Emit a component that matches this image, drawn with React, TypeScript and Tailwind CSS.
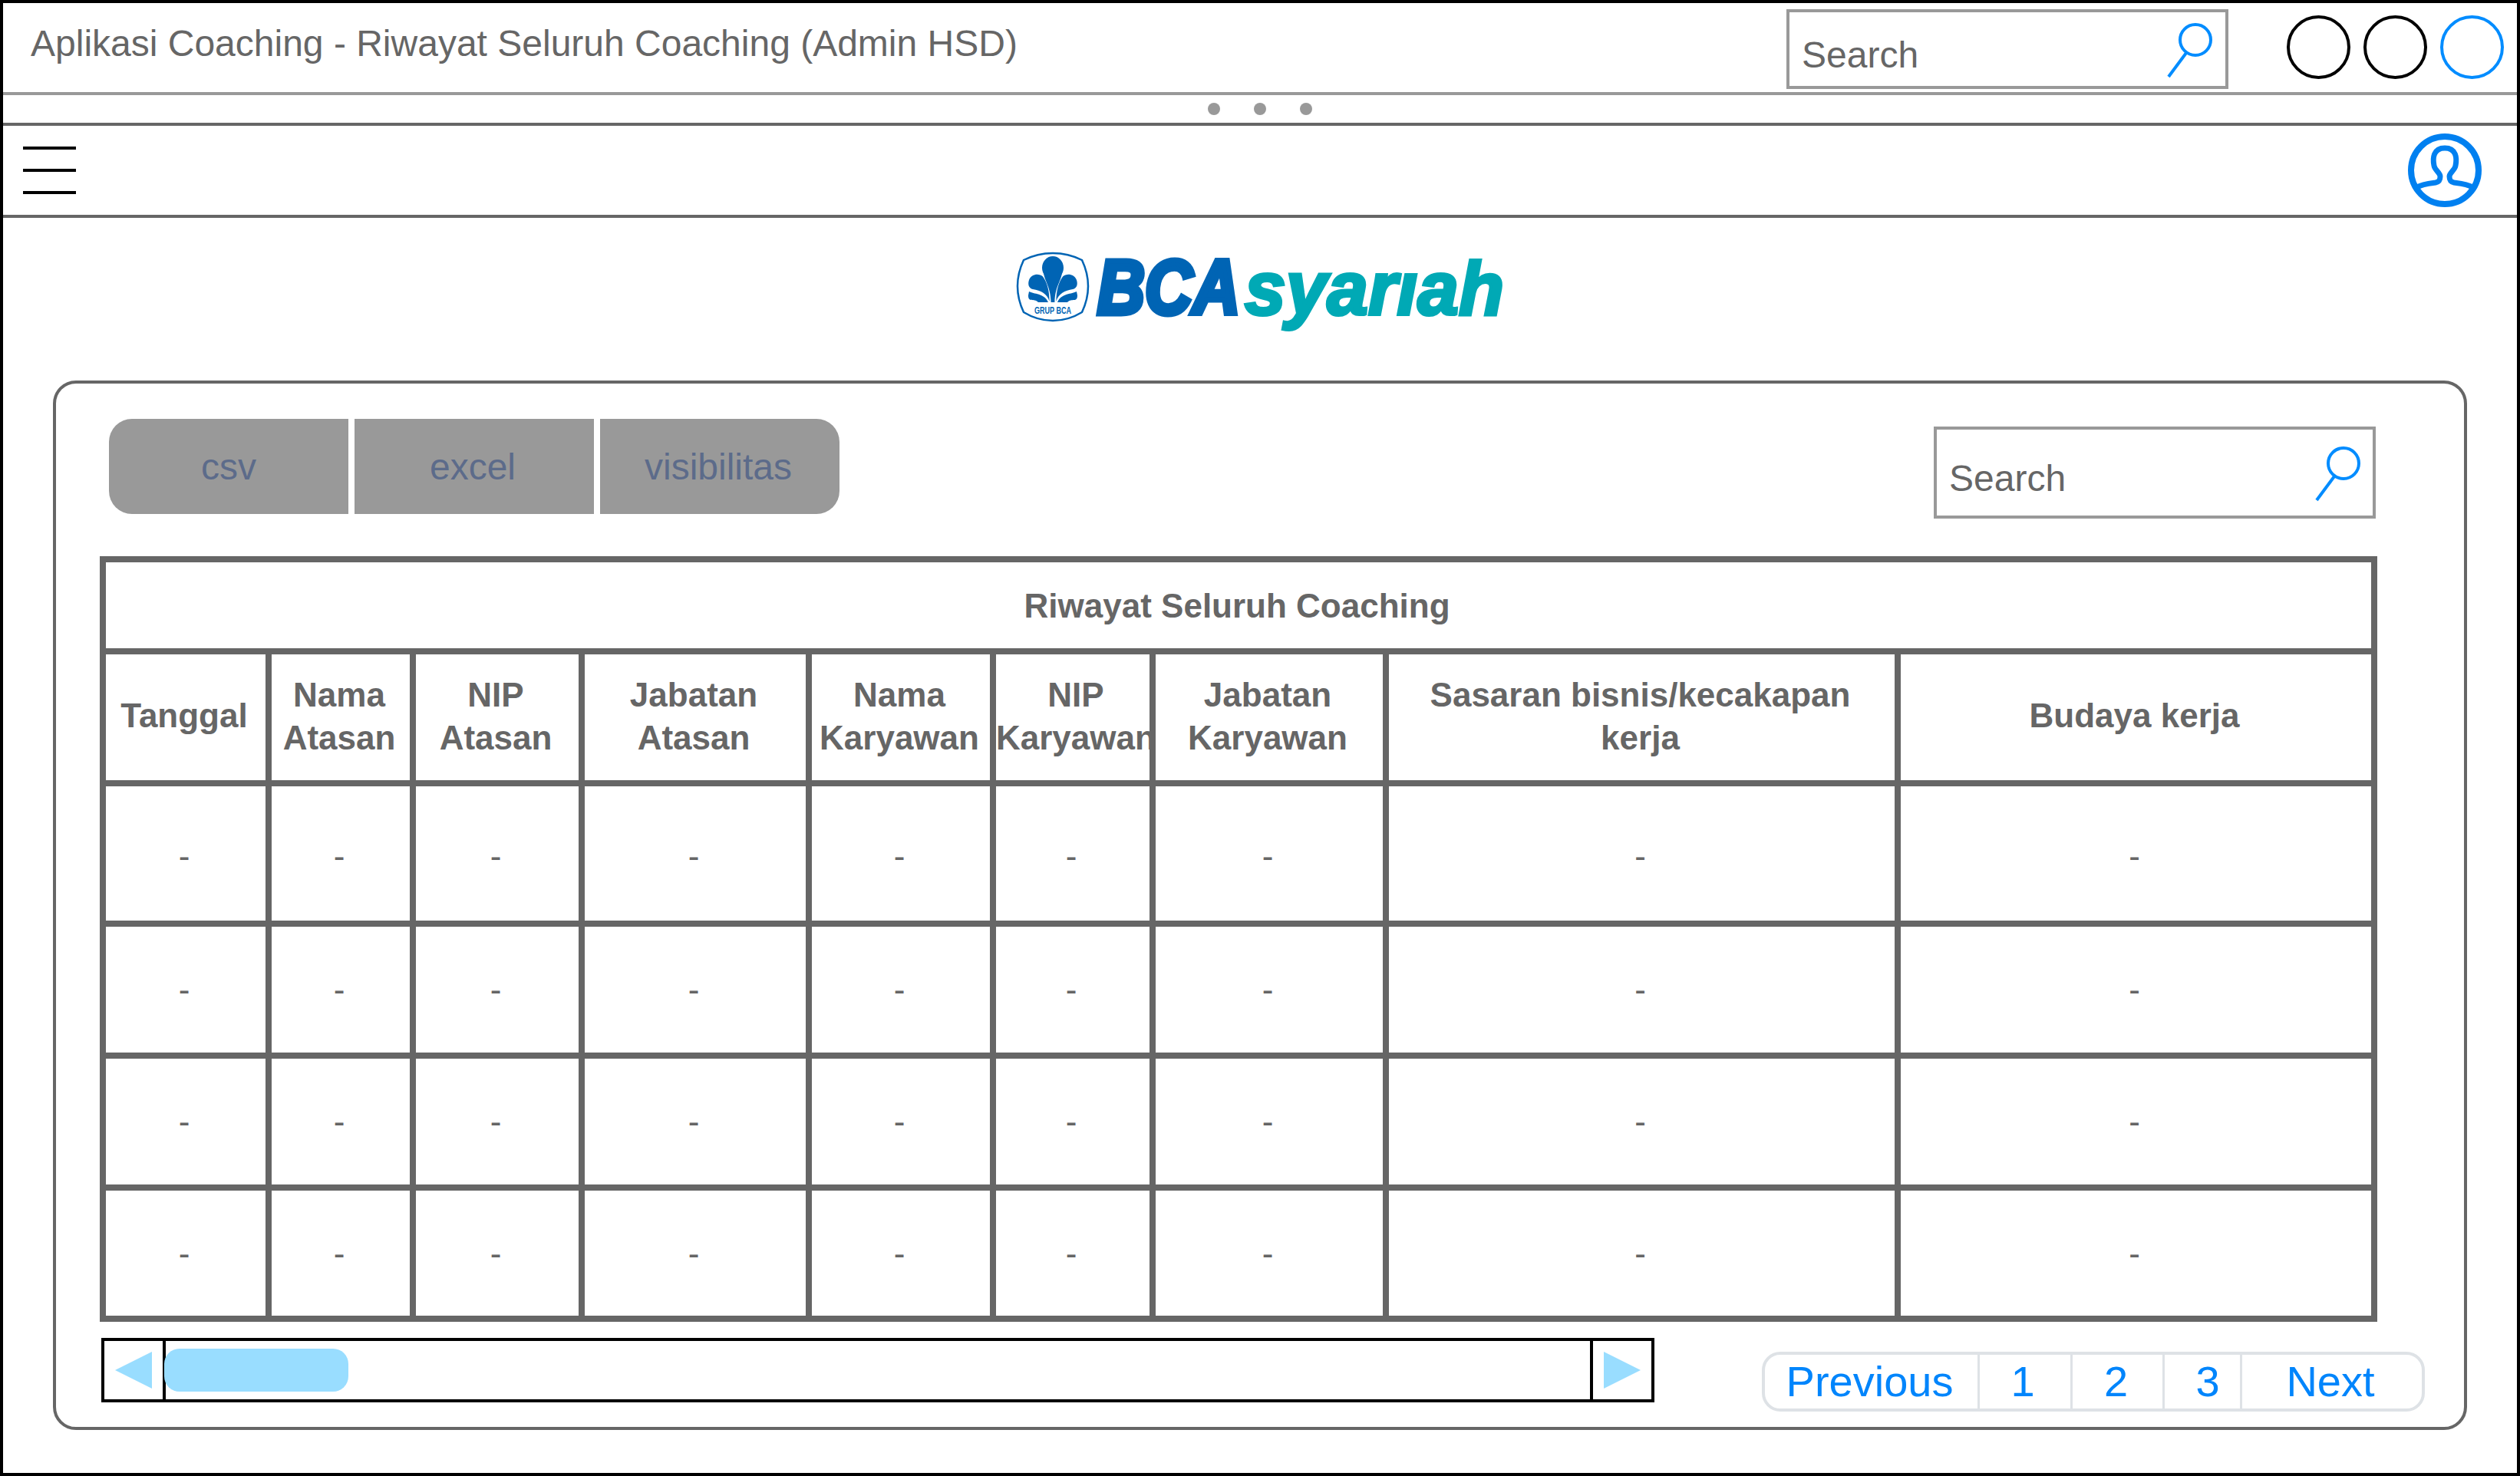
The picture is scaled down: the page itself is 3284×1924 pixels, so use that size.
const FONT = "font-['Liberation_Sans',Arial,sans-serif]";

const COLUMNS = [
  { title: ['Tanggal'], width: 216 },
  { title: ['Nama', 'Atasan'], width: 188 },
  { title: ['NIP', 'Atasan'], width: 220 },
  { title: ['Jabatan', 'Atasan'], width: 296 },
  { title: ['Nama', 'Karyawan'], width: 240 },
  { title: ['NIP', 'Karyawan'], width: 208 },
  { title: ['Jabatan', 'Karyawan'], width: 304 },
  { title: ['Sasaran bisnis/kecakapan', 'kerja'], width: 667 },
  { title: ['Budaya kerja'], width: 621 },
];

const ROW_STYLES = ['h-[183px] pt-[6px]', 'h-[172px]', 'h-[172px]', 'h-[171px]'];

const SearchBox = ({ className, textClass, iconClass }: { className: string; textClass: string; iconClass: string }) => (
  <div className={`relative w-[576px] border-4 border-[#999999] text-[48px] leading-[55px] text-[#666666] ${className}`}>
    <span className={`absolute left-[16px] ${textClass}`}>Search</span>
    <svg className={`absolute ${iconClass}`} width="62" height="76" viewBox="0 0 62 76" fill="none" stroke="#008cff">
      <circle cx="38" cy="24" r="20" strokeWidth="4" />
      <path d="M26 41 L3 72" strokeWidth="4" />
    </svg>
  </div>
);

const LEAVES = (
  <>
    <path d="M38 34 C40 46 47 52 47.6 72 L50 72 L50 34 Z" />
    <path d="M45.6 71 C45.6 56 42 45 37 38.5 C32 34 22 35 19 43 C17 49 19 54 24 55 C34 56.5 43 61 45.6 71 Z" />
    <path d="M19 58 C25 61.5 39 60 44 72 L31 72 C25 66 18 73 18 63 Z" />
  </>
);

const BcaLogo = () => (
  <svg className="block" width="645" height="125" viewBox="0 0 645 125">
    <path d="M50 8 Q30 8 12 17 Q4 34 4 51 Q4 68 12 85 Q30 96 50 96 Q70 96 88 85 Q96 68 96 51 Q96 34 88 17 Q70 8 50 8 Z" fill="none" stroke="#0064b4" strokeWidth="2.5" />
    <g fill="#0064b4">
      <ellipse cx="50" cy="27" rx="14" ry="15" />
      {LEAVES}
      <g transform="translate(100 0) scale(-1 1)">{LEAVES}</g>
    </g>
    <text x="26" y="87" fontFamily="Liberation Sans" fontSize="12" fontWeight="700" fill="#0064b4" textLength="48" lengthAdjust="spacingAndGlyphs">GRUP BCA</text>
    <text x="108" y="87" fontFamily="Liberation Sans" fontSize="100" fontWeight="700" fontStyle="italic" fill="#0064b4" stroke="#0064b4" strokeWidth="7" textLength="186" lengthAdjust="spacingAndGlyphs">BCA</text>
    <text x="300" y="88" fontFamily="Liberation Sans" fontSize="98" fontWeight="700" fontStyle="italic" fill="#00a9b5" stroke="#00a9b5" strokeWidth="4" textLength="338" lengthAdjust="spacingAndGlyphs">syarıah</text>
  </svg>
);

export default function App() {
  return (
    <div className={`flex h-[1924px] w-[3284px] flex-col overflow-hidden border-4 border-black bg-white ${FONT}`}>
      {/* title bar */}
      <div className="flex h-[120px] shrink-0 border-b-4 border-[#999999]">
        <div className="ml-[36px] pt-[25px] text-[48px] leading-[55px] text-[#666666]">Aplikasi Coaching - Riwayat Seluruh Coaching (Admin HSD)</div>
        <SearchBox className="ml-auto mt-[8px] h-[104px]" textClass="top-[28px]" iconClass="right-[15px] top-[12px]" />
        <div className="ml-[76px] mt-[16px] flex gap-[17px]">
          <div className="size-[83px] rounded-full border-4 border-black" />
          <div className="size-[83px] rounded-full border-4 border-black" />
          <div className="size-[83px] rounded-full border-4 border-[#008cff]" />
        </div>
        <div className="w-[17px]" />
      </div>

      {/* dots */}
      <div className="flex h-[36px] shrink-0 items-center justify-center gap-[44px]">
        <div className="size-[16px] rounded-full bg-[#999999]" />
        <div className="size-[16px] rounded-full bg-[#999999]" />
        <div className="size-[16px] rounded-full bg-[#999999]" />
      </div>

      {/* nav */}
      <div className="-mx-1 flex h-[124px] shrink-0 items-center justify-between border-4 border-[#666666] pl-[26px] pr-[46px]">
        <div className="flex w-[69px] flex-col gap-[25px]">
          <div className="h-1 bg-black" />
          <div className="h-1 bg-black" />
          <div className="h-1 bg-black" />
        </div>
        <svg width="96" height="96" viewBox="0 0 96 96" fill="none" stroke="#0080f0">
          <circle cx="48" cy="48" r="44" strokeWidth="8" />
          <path d="M12 70 C18 66 28 65 36 64 C41 63 42 60 42 56 C42 51 35 48 34 42 C32 32 33 19 48 19 C63 19 64 32 62 42 C61 48 54 51 54 56 C54 60 55 63 60 64 C68 65 78 66 84 70" strokeWidth="7" />
        </svg>
      </div>

      {/* content */}
      <div className="flex min-h-0 flex-1 flex-col">
        <div className="ml-[1318px] mt-[38px]">
          <BcaLogo />
        </div>
        <div className="ml-[65px] mt-[49px] flex h-[1368px] w-[3146px] flex-col rounded-[30px] border-4 border-[#666666]">
          <div className="flex items-start">
            <div className="ml-[69px] mt-[46px] flex h-[124px] gap-[8px] pt-0 text-[48px] text-[#5c6b8a]">
              <div className="flex w-[312px] items-center justify-center rounded-l-[30px] bg-[#999999] pt-[2px]">csv</div>
              <div className="flex w-[312px] items-center justify-center bg-[#999999] pr-[4px] pt-[2px]">excel</div>
              <div className="flex w-[312px] items-center justify-center rounded-r-[30px] bg-[#999999] pr-[4px] pt-[2px]">visibilitas</div>
            </div>
            <SearchBox className="ml-[1426px] mt-[56px] h-[120px]" textClass="top-[36px]" iconClass="right-[14px] top-[20px]" />
          </div>

          <table className="ml-[57px] mt-[49px] w-[2968px] table-fixed border-collapse border-[8px] border-[#666666] text-center text-[#666666]">
            <colgroup>
              {COLUMNS.map((col, i) => (
                <col key={i} style={{ width: col.width }} />
              ))}
            </colgroup>
            <thead>
              <tr className="h-[120px]">
                <th colSpan={9} className="border-[8px] border-[#666666] pr-[4px] pt-[2px] text-[44px] font-bold">Riwayat Seluruh Coaching</th>
              </tr>
              <tr className="h-[172px]">
                {COLUMNS.map((col, i) => (
                  <th
                    key={i}
                    className={`overflow-hidden whitespace-nowrap border-[8px] border-[#666666] pr-[4px] text-[44px] font-bold leading-[56px] ${col.title.length === 1 ? 'pb-[8px]' : 'pb-[2px]'}`}
                  >
                    <div className="inline-block align-middle">
                      {col.title.map((line) => (
                        <div key={line}>{line}</div>
                      ))}
                    </div>
                  </th>
                ))}
              </tr>
            </thead>
            <tbody>
              {ROW_STYLES.map((style, r) => (
                <tr key={r}>
                  {COLUMNS.map((_, i) => (
                    <td key={i} className={`border-[8px] border-[#666666] pr-[4px] text-[44px] ${style}`}>-</td>
                  ))}
                </tr>
              ))}
            </tbody>
          </table>

          <div className="flex items-start">
            {/* scrollbar */}
            <div className="ml-[59px] mt-[21px] flex h-[84px] w-[2024px] items-center border-4 border-black">
              <div className="flex h-full w-[80px] shrink-0 items-center border-r-4 border-black pl-[14px]">
                <svg width="48" height="48" viewBox="0 0 48 48"><path d="M0 24 L48 0 L48 48 Z" fill="#99ddff" /></svg>
              </div>
              <div className="-ml-[2px] h-[56px] w-[240px] rounded-[20px] bg-[#99ddff]" />
              <div className="ml-auto flex h-full w-[80px] shrink-0 items-center border-l-4 border-black pl-[14px]">
                <svg width="48" height="48" viewBox="0 0 48 48"><path d="M0 0 L48 24 L0 48 Z" fill="#99ddff" /></svg>
              </div>
            </div>

            {/* pagination */}
            <div className="ml-[140px] mt-[39px] flex h-[78px] w-[864px] rounded-[24px] border-4 border-[#dee2e6] text-[56px] text-[#0085fc]">
              <div className="flex w-[280px] items-center justify-center border-r-[3px] border-[#dee2e6] pr-[4px]">Previous</div>
              <div className="flex w-[121px] items-center justify-center border-r-[3px] border-[#dee2e6] pr-[6px]">1</div>
              <div className="flex w-[120px] items-center justify-center border-r-[3px] border-[#dee2e6] pr-[4px]">2</div>
              <div className="flex w-[101px] items-center justify-center border-r-[3px] border-[#dee2e6] pl-[14px]">3</div>
              <div className="flex flex-1 items-center justify-center pr-[4px]">Next</div>
            </div>
          </div>
        </div>
      </div>
    </div>
  );
}
